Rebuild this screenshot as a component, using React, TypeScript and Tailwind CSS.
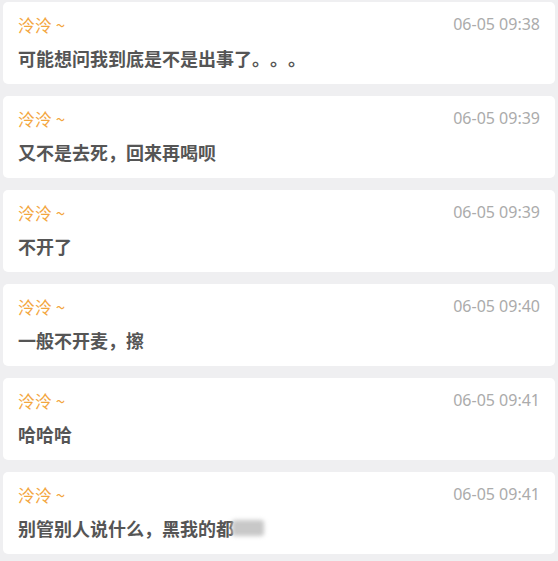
const messages = [
  { name: "泠泠 ~", time: "06-05 09:38", text: "可能想问我到底是不是出事了。。。" },
  { name: "泠泠 ~", time: "06-05 09:39", text: "又不是去死，回来再喝呗" },
  { name: "泠泠 ~", time: "06-05 09:39", text: "不开了" },
  { name: "泠泠 ~", time: "06-05 09:40", text: "一般不开麦，擦" },
  { name: "泠泠 ~", time: "06-05 09:41", text: "哈哈哈" },
  { name: "泠泠 ~", time: "06-05 09:41", text: "别管别人说什么，黑我的都", blurred: true },
]

export default function App() {
  return (
    <div
      className="min-h-screen w-full bg-[#efeff1] px-[3px] pt-[2px] flex flex-col gap-[12px] [text-spacing-trim:space-all]"
      style={{ fontFamily: '"Noto Sans CJK SC", "Noto Sans", sans-serif' }}
    >
      {messages.map((m, i) => (
        <div key={i} className="h-[82px] bg-white rounded-[5px] px-[15px] pt-[11px]">
          <div className="flex items-center justify-between h-[24px]">
            <span className="text-[17px] leading-[24px] text-[#f3a640]">{m.name}</span>
            <span
              className="text-[16px] leading-[24px] text-[#ababab] -mt-[2px]"
              style={{ fontFamily: '"Noto Sans", sans-serif' }}
            >
              {m.time}
            </span>
          </div>
          <div className="mt-[9px] flex items-center text-[18px] leading-[24px] font-bold text-[#555555]">
            <span>{m.text}</span>
            {m.blurred && (
              <span className="inline-block w-[32px] h-[16px] -ml-[2px] bg-[#c8c8c8] blur-[2px] rounded-[3px]" />
            )}
          </div>
        </div>
      ))}
    </div>
  )
}
